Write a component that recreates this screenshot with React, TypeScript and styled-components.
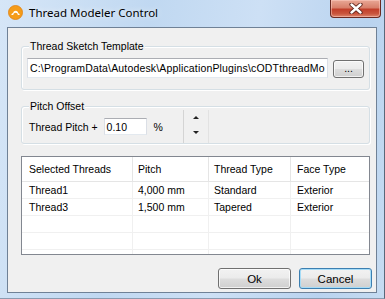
import React from "react";
import styled, { createGlobalStyle } from "styled-components";

const Global = createGlobalStyle`
  html, body { margin: 0; padding: 0; overflow: hidden; background: #c4dbf2; }
  * { box-sizing: border-box; }
`;

const Window = styled.div`
  width: 385px;
  height: 299px;
  display: flex;
  flex-direction: column;
  background: linear-gradient(100deg, #d6e6f7 0%, #c0d8f1 35%, #cde0f5 60%, #b9d3ef 85%, #c6dcf2 100%);
  border-right: 1px solid #59687a;
  border-bottom: 1px solid #8a9bb0;
  font-family: "Liberation Sans", Arial, sans-serif;
  font-size: 10.5px;
  color: #000;
`;

const TitleBar = styled.div`
  height: 27px;
  display: flex;
  align-items: flex-start;
  padding-left: 8px;
  padding-right: 3px;
`;

const AppIcon = styled.svg`
  width: 15px;
  height: 15px;
  margin-top: 5px;
  flex: none;
`;

const Title = styled.div`
  margin-left: 6px;
  margin-top: 5px;
  font-family: "Noto Sans", "Liberation Sans", sans-serif;
  font-size: 11.5px;
  line-height: 16px;
  color: #000;
  text-shadow: 0 0 6px rgba(255, 255, 255, 0.9);
`;

const CloseButton = styled.div`
  margin-left: auto;
  width: 51px;
  height: 18px;
  border: 1px solid #6b2a22;
  border-top: none;
  border-radius: 0 0 4px 4px;
  background: linear-gradient(#e9a896 0%, #d8806b 45%, #c23f2a 55%, #c9553d 80%, #dc866d 100%);
  box-shadow: inset 0 0 0 1px rgba(255, 210, 200, 0.5);
  display: flex;
  align-items: center;
  justify-content: center;
`;

const Client = styled.div`
  margin: 0 7px;
  height: 266px;
  background: #f0f0f0;
  border: 1px solid #6f8196;
  padding: 18px 6px 0 13px;
  display: flex;
  flex-direction: column;
`;

const GroupBox = styled.div<{ $h: number; $gap: number }>`
  position: relative;
  height: ${(p) => p.$h}px;
  margin-bottom: ${(p) => p.$gap}px;
  border: 1px solid #d5dfe5;
  border-radius: 3px;
  box-shadow: inset 1px 1px 0 #fff, 1px 1px 0 #fff;
  display: flex;
  align-items: center;
`;

const Legend = styled.span`
  position: absolute;
  top: -7px;
  left: 7px;
  padding: 0 1px;
  background: #f0f0f0;
  line-height: 13px;
`;

const TemplateRow = styled(GroupBox)`
  padding: 11px 5px 0 5px;
  align-items: flex-start;
`;

const TextField = styled.div<{ $w: number; $h: number; $spacing?: number }>`
  width: ${(p) => p.$w}px;
  height: ${(p) => p.$h}px;
  background: #fff;
  border: 1px solid #abadb3;
  border-left-color: #dbdfe6;
  border-right-color: #dbdfe6;
  border-bottom-color: #e3e9ef;
  padding-left: 2px;
  display: flex;
  align-items: center;
  white-space: nowrap;
  overflow: hidden;
  letter-spacing: ${(p) => p.$spacing ?? 0}px;
`;

const SmallButton = styled.div`
  margin-left: 5px;
  margin-top: 2px;
  width: 31px;
  height: 18px;
  border: 1px solid #707070;
  border-radius: 3px;
  background: linear-gradient(#f2f2f2 0%, #ebebeb 48%, #dddddd 52%, #cfcfcf 100%);
  box-shadow: inset 0 0 0 1px rgba(255, 255, 255, 0.7);
  display: flex;
  align-items: center;
  justify-content: center;
  line-height: 10px;
  padding-bottom: 2px;
`;

const PitchRow = styled(GroupBox)`
  padding: 3px 0 0 7px;
`;

const FieldLabel = styled.span`
  margin-right: 6px;
`;

const Percent = styled.span`
  margin-left: 7px;
`;

const Spinner = styled.div`
  margin-left: 20px;
  width: 26px;
  height: 33px;
  border-left: 1px solid #d4d4d4;
  border-right: 1px solid #e2e2e2;
  display: flex;
  flex-direction: column;
  align-items: center;
  justify-content: space-between;
  padding: 6px 0 9px 1px;
`;

const Arrow = styled.div<{ $up?: boolean }>`
  width: 0;
  height: 0;
  border-left: 3.5px solid transparent;
  border-right: 3.5px solid transparent;
  ${(p) => (p.$up ? "border-bottom: 3.5px solid #222;" : "border-top: 3.5px solid #222;")}
`;

const Table = styled.div`
  height: 99px;
  border: 1px solid #828790;
  background: #fff;
  overflow: hidden;
  margin-bottom: 13px;
`;

const cols = "111px 76px 82px 1fr";

const HeaderRow = styled.div`
  display: grid;
  grid-template-columns: ${cols};
  height: 25px;
  border-bottom: 1px solid #e5e5e5;
`;

const HeaderCell = styled.div<{ $pad: number }>`
  display: flex;
  align-items: center;
  padding-left: ${(p) => p.$pad}px;
  border-right: 1px solid #e5e5e5;
  padding-bottom: 1px;
  &:last-child { border-right: none; }
`;

const Row = styled.div`
  display: grid;
  grid-template-columns: ${cols};
  height: 17px;
  border-bottom: 1px solid #f0f0f0;
`;

const Cell = styled.div<{ $pad: number }>`
  display: flex;
  align-items: center;
  padding-left: ${(p) => p.$pad}px;
  border-right: 1px solid #f0f0f0;
  white-space: nowrap;
  &:last-child { border-right: none; }
`;

const ButtonRow = styled.div`
  display: flex;
  justify-content: flex-end;
  gap: 8px;
  margin-right: -2px;
`;

const DialogButton = styled.div<{ $focused?: boolean }>`
  width: 73px;
  height: 21px;
  border: 1px solid ${(p) => (p.$focused ? "#3c7fb1" : "#707070")};
  border-radius: 3px;
  background: linear-gradient(#f2f2f2 0%, #ebebeb 48%, #dddddd 52%, #cfcfcf 100%);
  box-shadow: inset 0 0 0 1px ${(p) => (p.$focused ? "#a6dcf7" : "rgba(255,255,255,0.7)")};
  display: flex;
  align-items: center;
  justify-content: center;
  font-size: 11.5px;
`;

const columns = [
  { title: "Selected Threads", pad: 7 },
  { title: "Pitch", pad: 5 },
  { title: "Thread Type", pad: 5 },
  { title: "Face Type", pad: 6 },
];

const rows: string[][] = [
  ["Thread1", "4,000 mm", "Standard", "Exterior"],
  ["Thread3", "1,500 mm", "Tapered", "Exterior"],
  ["", "", "", ""],
  ["", "", "", ""],
  ["", "", "", ""],
];

export default function App() {
  return (
    <>
      <Global />
      <Window>
        <TitleBar>
          <AppIcon viewBox="0 0 16 16">
            <circle cx="8" cy="8" r="7.5" fill="#f59c1a" />
            <circle cx="8" cy="8" r="7.5" fill="none" stroke="#e07e0a" strokeWidth="0.8" />
            <path
              d="M3.6 10.6 C3.6 9.3 4.5 8.6 5.4 8.7 C5.8 7.1 6.9 6.2 8.2 6.2 C9.7 6.2 10.8 7.3 10.9 8.7 C11.9 8.7 12.5 9.6 12.4 10.6 Z"
              fill="#fff"
            />
            <path d="M5.6 10.6 C5.8 9.2 6.8 8.3 8.1 8.3 C9.4 8.3 10.3 9.2 10.5 10.6 Z" fill="#f59c1a" />
          </AppIcon>
          <Title>Thread Modeler Control</Title>
          <CloseButton>
            <svg width="14" height="11" viewBox="0 0 14 11">
              <path
                d="M2.5 1.5 L11.5 9.5 M11.5 1.5 L2.5 9.5"
                stroke="#5a2018"
                strokeWidth="4.2"
                fill="none"
                strokeLinecap="round"
              />
              <path
                d="M2.5 1.5 L11.5 9.5 M11.5 1.5 L2.5 9.5"
                stroke="#fff"
                strokeWidth="2.4"
                fill="none"
                strokeLinecap="round"
              />
            </svg>
          </CloseButton>
        </TitleBar>
        <Client>
          <TemplateRow $h={44} $gap={16}>
            <Legend>Thread Sketch Template</Legend>
            <TextField $w={302} $h={20} $spacing={0.16}>
              C:\ProgramData\Autodesk\ApplicationPlugins\cODTthreadMo
            </TextField>
            <SmallButton>...</SmallButton>
          </TemplateRow>
          <PitchRow $h={38} $gap={12}>
            <Legend>Pitch Offset</Legend>
            <FieldLabel>Thread Pitch +</FieldLabel>
            <TextField $w={43} $h={17}>0.10</TextField>
            <Percent>%</Percent>
            <Spinner>
              <Arrow $up />
              <Arrow />
            </Spinner>
          </PitchRow>
          <Table>
            <HeaderRow>
              {columns.map((c) => (
                <HeaderCell key={c.title} $pad={c.pad}>
                  {c.title}
                </HeaderCell>
              ))}
            </HeaderRow>
            {rows.map((r, i) => (
              <Row key={i}>
                {r.map((v, j) => (
                  <Cell key={j} $pad={columns[j].pad}>
                    {v}
                  </Cell>
                ))}
              </Row>
            ))}
          </Table>
          <ButtonRow>
            <DialogButton>Ok</DialogButton>
            <DialogButton $focused>Cancel</DialogButton>
          </ButtonRow>
        </Client>
      </Window>
    </>
  );
}
